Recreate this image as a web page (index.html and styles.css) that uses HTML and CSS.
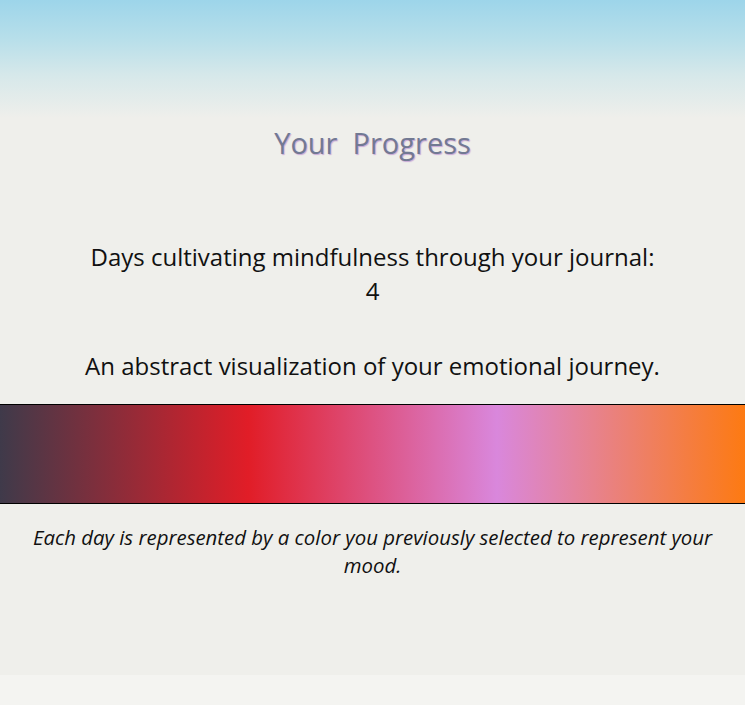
FILE: index.html
```html
<!DOCTYPE html>
<html lang="en">
<head>
<meta charset="utf-8">
<title>Your Progress</title>
<link rel="stylesheet" href="styles.css">
</head>
<body>
<main class="page">
  <h1 class="title">Your&nbsp; Progress</h1>
  <section class="stats">
    <p class="days">Days cultivating mindfulness through your journal:<br>4</p>
    <p class="lead">An abstract visualization of your emotional journey.</p>
  </section>
  <div class="mood-bar"></div>
  <p class="note">Each day is represented by a color you previously selected to represent your mood.</p>
</main>
<footer class="ground"></footer>
</body>
</html>
```
FILE: styles.css
```css
html, body {
  margin: 0;
  padding: 0;
}
body {
  background: #efefeb;
  font-family: "Open Sans", "Noto Sans", sans-serif;
  color: #111;
  overflow: hidden;
}
.page {
  height: 675px;
  background: linear-gradient(to bottom, #9dd5ea 0px, #b8dfea 40px, #d6e8ea 75px, #efefeb 118px, #efefeb 100%);
  display: flex;
  flex-direction: column;
  align-items: stretch;
}
.title {
  margin: 124px 0 0;
  font-size: 29px;
  line-height: 38px;
  font-weight: 500;
  text-align: center;
  color: #727993;
  text-shadow: 1px 1px 1px #c8a8d6;
}
.stats {
  text-align: center;
}
.days {
  margin: 78px 0 0;
  font-size: 24px;
  line-height: 34px;
}
.lead {
  margin: 41px 0 0;
  font-size: 24px;
  line-height: 34px;
}
.mood-bar {
  margin-top: 21px;
  height: 98px;
  border-top: 1px solid #000;
  border-bottom: 1px solid #000;
  background: linear-gradient(to right, #3f3a4a 0%, #e11d27 33.3%, #d987dc 66.7%, #fd7a12 100%);
}
.note {
  margin: 19px 0 0;
  padding: 0 20px;
  font-size: 20.4px;
  line-height: 28px;
  font-style: italic;
  text-align: center;
}
.ground {
  height: 30px;
  background: #f4f4f1;
}
```
